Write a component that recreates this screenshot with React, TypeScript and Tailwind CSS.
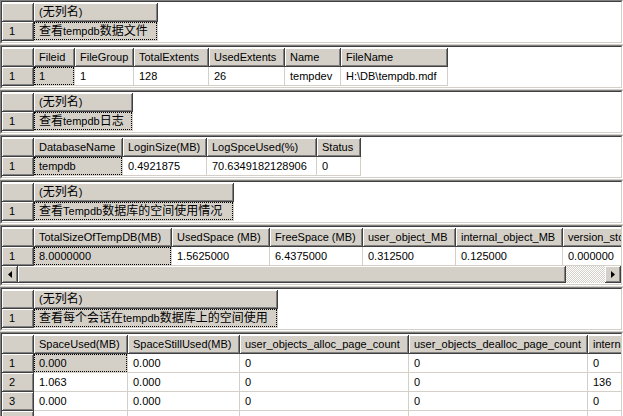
import React from "react";

type Col = { w: number; label: string };

const raised =
  "bg-[#d4d0c8] border-r border-b border-[#404040] shadow-[inset_1px_1px_0_#ffffff,inset_-1px_-1px_0_#808080]";

// CJK glyphs render a bit larger than the latin text in the grid
const Txt = ({ s }: { s: string }) => {
  const parts = s.match(/[\u3000-\u9fff\uff00-\uffef]+|[^\u3000-\u9fff\uff00-\uffef]+/g) || [];
  return (
    <>
      {parts.map((p, i) =>
        /[\u3000-\u9fff\uff00-\uffef]/.test(p) ? (
          <span key={i} className="text-[12px]">
            {p}
          </span>
        ) : (
          <span key={i}>{p}</span>
        )
      )}
    </>
  );
};

const HeaderCell = ({ w, children }: { w: number; children?: React.ReactNode }) => (
  <div
    className={`${raised} shrink-0 h-full flex items-center pl-[5px] whitespace-nowrap overflow-hidden`}
    style={{ width: w }}
  >
    {children}
  </div>
);

const RowHead = ({ n }: { n?: string }) => (
  <div className={`${raised} shrink-0 w-[32px] h-full flex items-center pl-[7px]`}>{n}</div>
);

const Cell = ({
  w,
  children,
  selected,
}: {
  w: number;
  children?: React.ReactNode;
  selected?: boolean;
}) => (
  <div
    className="shrink-0 h-full border-r border-b border-[#d4d0c8] overflow-hidden"
    style={{ width: w }}
  >
    {selected ? (
      <div className="h-full bg-[#d4d0c8] border border-dotted border-black flex items-center pl-[4px] whitespace-nowrap">
        {children}
      </div>
    ) : (
      <div className="h-full flex items-center pl-[5px] whitespace-nowrap">{children}</div>
    )}
  </div>
);

const Arrow = ({ dir }: { dir: "l" | "r" }) => (
  <div className={`${raised} shrink-0 w-[16px] h-full flex items-center justify-center`}>
    <svg width="4" height="7" viewBox="0 0 4 7">
      {dir === "l" ? <polygon points="4,0 4,7 0,3.5" fill="#000" /> : <polygon points="0,0 0,7 4,3.5" fill="#000" />}
    </svg>
  </div>
);

const Panel = ({
  cols,
  rows,
  scroll,
  first,
}: {
  cols: Col[];
  rows: string[][];
  scroll?: boolean;
  first?: boolean;
}) => (
  <div
    className={`${first ? "" : "mt-[1px]"} border border-[#808080] border-b-white border-r-white shrink-0`}
  >
    <div className="border border-[#404040] border-b-[#d4d0c8] border-r-[#d4d0c8] bg-white overflow-hidden pt-[1px] pb-[1px]">
      <div className="flex h-[19px]">
        <RowHead />
        {cols.map((c, i) => (
          <HeaderCell key={i} w={c.w}>
            <Txt s={c.label} />
          </HeaderCell>
        ))}
      </div>
      {rows.map((r, ri) => (
        <div key={ri} className="flex h-[19px]">
          {/* empty trailing row is the one cut by the window edge */}
          <RowHead n={r.every((v) => v === "") ? "" : String(ri + 1)} />
          {r.map((v, ci) => (
            <Cell key={ci} w={cols[ci].w} selected={ri === 0 && ci === 0}>
              <Txt s={v} />
            </Cell>
          ))}
        </div>
      ))}
      {scroll && (
        <div className="flex h-[17px]">
          <Arrow dir="l" />
          <div className={`${raised} shrink-0 w-[548px] h-full`} />
          <div className="flex-1 h-full bg-[repeating-conic-gradient(#d4d0c8_0_25%,#ffffff_0_50%)] bg-[length:2px_2px]" />
          <Arrow dir="r" />
        </div>
      )}
    </div>
  </div>
);

export default function App() {
  return (
    <div className="w-[623px] h-[416px] overflow-hidden bg-[#d4d0c8] flex flex-col text-[11px] leading-none text-black font-['Tahoma','Liberation_Sans','Noto_Sans_CJK_SC',sans-serif]">
      <Panel first cols={[{ w: 124, label: "(无列名)" }]} rows={[["查看tempdb数据文件"]]} />
      <Panel
        cols={[
          { w: 41, label: "Fileid" },
          { w: 59, label: "FileGroup" },
          { w: 75, label: "TotalExtents" },
          { w: 76, label: "UsedExtents" },
          { w: 56, label: "Name" },
          { w: 107, label: "FileName" },
        ]}
        rows={[["1", "1", "128", "26", "tempdev", "H:\\DB\\tempdb.mdf"]]}
      />
      <Panel cols={[{ w: 99, label: "(无列名)" }]} rows={[["查看tempdb日志"]]} />
      <Panel
        cols={[
          { w: 89, label: "DatabaseName" },
          { w: 84, label: "LoginSize(MB)" },
          { w: 110, label: "LogSpceUsed(%)" },
          { w: 44, label: "Status" },
        ]}
        rows={[["tempdb", "0.4921875", "70.6349182128906", "0"]]}
      />
      <Panel cols={[{ w: 200, label: "(无列名)" }]} rows={[["查看Tempdb数据库的空间使用情况"]]} />
      <Panel
        scroll
        cols={[
          { w: 138, label: "TotalSizeOfTempDB(MB)" },
          { w: 98, label: "UsedSpace (MB)" },
          { w: 93, label: "FreeSpace (MB)" },
          { w: 93, label: "user_object_MB" },
          { w: 107, label: "internal_object_MB" },
          { w: 120, label: "version_store_MB" },
        ]}
        rows={[["8.0000000", "1.5625000", "6.4375000", "0.312500", "0.125000", "0.000000"]]}
      />
      <Panel cols={[{ w: 244, label: "(无列名)" }]} rows={[["查看每个会话在tempdb数据库上的空间使用"]]} />
      <Panel
        cols={[
          { w: 94, label: "SpaceUsed(MB)" },
          { w: 112, label: "SpaceStillUsed(MB)" },
          { w: 169, label: "user_objects_alloc_page_count" },
          { w: 179, label: "user_objects_dealloc_page_count" },
          { w: 180, label: "internal_objects_alloc_page_count" },
        ]}
        rows={[
          ["0.000", "0.000", "0", "0", "0"],
          ["1.063", "0.000", "0", "0", "136"],
          ["0.000", "0.000", "0", "0", "0"],
          ["", "", "", "", ""],
        ]}
      />
    </div>
  );
}
